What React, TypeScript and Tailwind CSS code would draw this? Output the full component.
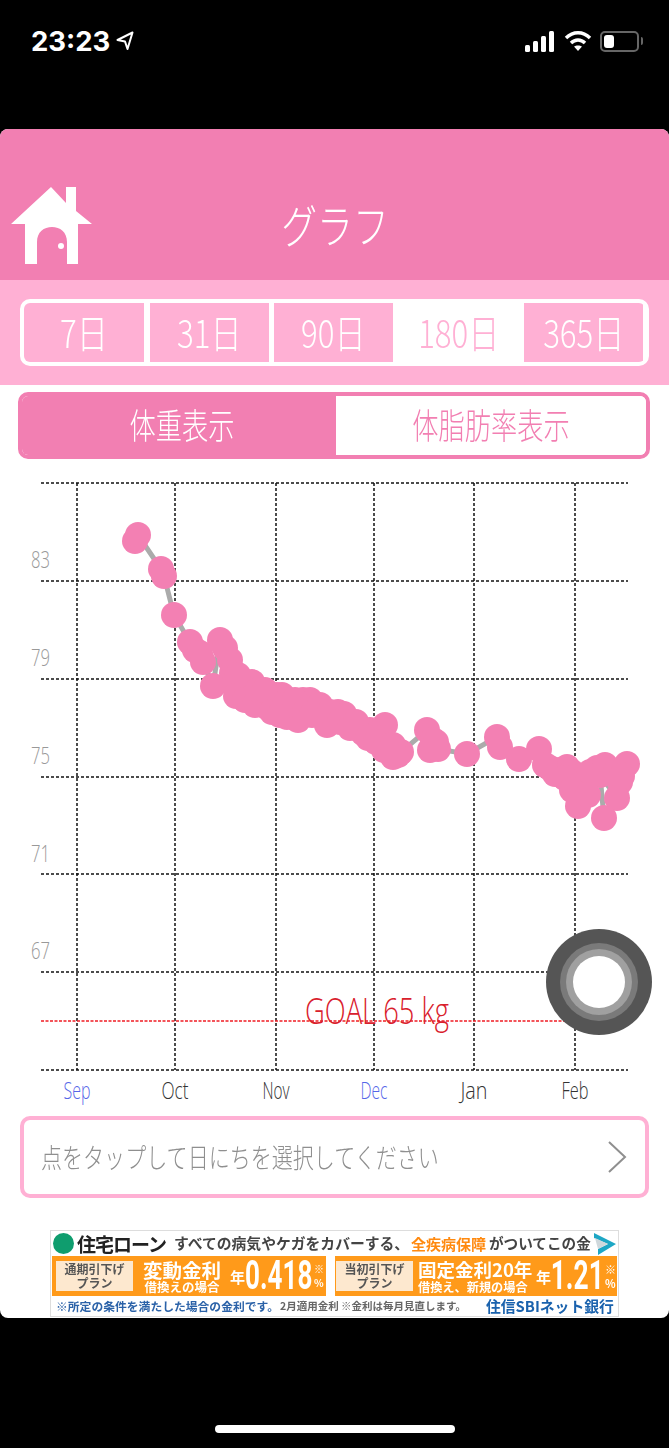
import React from "react";

const JP = { fontFamily: '"Noto Sans CJK JP", sans-serif' };
const NUM = { fontFamily: "Roboto, sans-serif" };

const hLines = [483, 581, 679, 777, 874, 972, 1070];
const vLines = [77, 175, 276, 374, 474, 575];
const yLabels: [string, number][] = [["83", 568], ["79", 666], ["75", 764], ["71", 862], ["67", 959]];
const months: [string, number, string][] = [
  ["Sep", 77, "#5566e8"], ["Oct", 175, "#333333"], ["Nov", 276, "#333333"],
  ["Dec", 374, "#5566e8"], ["Jan", 474, "#333333"], ["Feb", 575, "#333333"],
];
const pts: [number, number][] = [
  [135, 541], [138, 535], [161, 569], [164, 576], [174, 615], [190, 642], [195, 650], [200, 653], [203, 662],
  [213, 686], [220, 640], [225, 648], [230, 660], [232, 673], [235, 682], [240, 690], [243, 693], [248, 688],
  [252, 682], [256, 695], [262, 702], [267, 707], [272, 700], [277, 695], [282, 695], [287, 717], [292, 710],
  [298, 720], [303, 700], [310, 700], [316, 706], [322, 714], [327, 725], [333, 718], [338, 712], [344, 714],
  [350, 722], [357, 728], [363, 733], [370, 730], [378, 732], [385, 725], [382, 738], [388, 748], [393, 757],
  [398, 755], [401, 752], [427, 730], [433, 740], [430, 750], [438, 749], [467, 754], [497, 737], [500, 747],
  [519, 759], [539, 749], [550, 768], [555, 774], [560, 770], [567, 767], [572, 772], [577, 777], [577, 790],
  [578, 806], [587, 780], [597, 768], [610, 770], [627, 764], [620, 782], [617, 798], [600, 775], [604, 818],
];
const fill: [number, number][] = [
  [238, 675], [236, 696], [245, 700], [255, 705], [258, 690], [265, 690], [272, 712], [280, 715], [285, 705],
  [295, 700], [305, 712], [312, 715], [320, 705], [330, 712], [340, 722], [350, 728], [356, 722], [368, 738],
  [376, 742], [384, 750], [393, 745], [583, 785], [590, 772], [565, 778], [572, 790], [605, 765], [616, 772],
  [622, 776], [545, 765], [588, 795], [436, 742],
];

function House() {
  return (
    <svg width="82" height="78" viewBox="11 187 82 78" className="absolute left-[11px] top-[58px]">
      <path
        fillRule="evenodd"
        fill="#ffffff"
        d="M51 187 L66 203 L66 187 L76 187 L76 211 L92 224 L78 224 L78 264 L67 264 L67 242 C67 232 60 227 52 227 C44 227 37 232 37 242 L37 264 L25 264 L25 224 L11 224 Z"
      />
      <ellipse cx="61" cy="246" rx="3" ry="3" fill="#ffffff" />
    </svg>
  );
}

function PeriodCell({ label, className }: { label: string; className: string }) {
  return (
    <div className={`flex h-[59px] items-center justify-center pb-[3px] ${className}`}>
      <span className="scale-x-[0.8] whitespace-nowrap text-[39px] font-light leading-none">{label}</span>
    </div>
  );
}

function Chart() {
  return (
    <svg width="669" height="640" viewBox="0 465 669 640" className="block">
      {hLines.map((y) => (
        <line key={y} x1="41" x2="628" y1={y} y2={y} stroke="#111111" strokeWidth="1.5" strokeDasharray="3 2" />
      ))}
      {vLines.map((x) => (
        <line key={x} x1={x} x2={x} y1="483" y2="1070" stroke="#111111" strokeWidth="1.5" strokeDasharray="3 2" />
      ))}
      <line x1="41" x2="565" y1="1021" y2="1021" stroke="#f01c24" strokeWidth="1.6" strokeDasharray="3 1.5" />
      {yLabels.map(([t, y]) => (
        <text key={t} x="31" y={y} fontSize="24" fill="#999999" fontFamily="Open Sans" fontWeight="300" textLength="19" lengthAdjust="spacingAndGlyphs">{t}</text>
      ))}
      {months.map(([t, x, c]) => (
        <text key={t} x={x} y="1099" fontSize="24" fill={c} fontFamily="Open Sans" fontWeight="300" textAnchor="middle" textLength="27" lengthAdjust="spacingAndGlyphs">{t}</text>
      ))}
      <text x="305" y="1024" fontSize="37" fill="#d9202c" fontFamily="Open Sans" fontWeight="300" textLength="144" lengthAdjust="spacingAndGlyphs">GOAL 65 kg</text>
      <polyline points={pts.map((p) => p.join(",")).join(" ")} fill="none" stroke="#ababab" strokeWidth="5" />
      {pts.concat(fill).map(([x, y], i) => (
        <circle key={i} cx={x} cy={y} r="13" fill="#f380b3" />
      ))}
      <circle cx="599" cy="982" r="53" fill="#555555" />
      <circle cx="599" cy="982" r="39" fill="#7a7a7a" />
      <circle cx="599" cy="982" r="33" fill="#a0a0a0" />
      <circle cx="599" cy="982" r="26" fill="#ffffff" />
    </svg>
  );
}

function Ad() {
  return (
    <div className="mx-auto mt-[32px] flex h-[87px] w-[569px] flex-col overflow-hidden whitespace-nowrap border border-[#dddddd] bg-white blur-[0.7px]" style={JP}>
      <div className="flex h-[25px] shrink-0 items-center pl-[2px] font-bold text-[#444444]">
        <div className="h-[21px] w-[21px] shrink-0 rounded-full bg-[#0f9d6e]" />
        <span className="ml-[3px] w-[97px] shrink-0 text-[19px] leading-none tracking-[-1px] text-[#222222]">住宅ローン</span>
        <span className="w-[237px] shrink-0 text-[14.8px] leading-none">すべての病気やケガをカバーする、</span>
        <span className="w-[78px] shrink-0 text-[15px] leading-none text-[#ff8a10]">全疾病保障</span>
        <span className="w-[103px] shrink-0 text-[14.6px] leading-none">がついてこの金</span>
        <svg width="26" height="24" viewBox="0 0 26 24" className="shrink-0">
          <path d="M2 1 L24 12 L6 23 L6 17 L16 12 L2 6 Z" fill="#1ea7c5" />
          <path d="M3 6 L16 12 L6 17 Z" fill="#cfd8dc" />
        </svg>
      </div>
      <div className="flex h-[40px] shrink-0 text-white">
        <div className="ml-[1px] flex w-[274px] shrink-0 items-center bg-[#ff9a1a] pl-[4px]">
          <div className="flex h-[30px] w-[77px] shrink-0 flex-col items-center justify-center bg-[#fde8cf] text-[12px] font-bold leading-[14px] text-[#555555]">
            <span>通期引下げ</span><span>プラン</span>
          </div>
          <div className="ml-[8px] flex w-[82px] shrink-0 flex-col items-center font-bold">
            <span className="text-[19.5px] leading-[21px]">変動金利</span>
            <span className="text-[12.5px] leading-[14px]">借換えの場合</span>
          </div>
          <span className="ml-[7px] w-[15px] shrink-0 text-[15px] font-bold leading-none">年</span>
          <span className="ml-[1px] flex w-[66px] shrink-0 justify-center">
            <span className="scale-x-[0.65] text-[40px] font-bold leading-none" style={NUM}>0.418</span>
          </span>
          <span className="ml-[2px] text-[10px] font-bold leading-[14px]">※<br />%</span>
        </div>
        <div className="ml-[9px] flex w-[282px] shrink-0 items-center bg-[#ff9a1a] pl-[1px]">
          <div className="flex h-[30px] w-[77px] shrink-0 flex-col items-center justify-center bg-[#fde8cf] text-[12px] font-bold leading-[14px] text-[#555555]">
            <span>当初引下げ</span><span>プラン</span>
          </div>
          <div className="ml-[5px] flex w-[114px] shrink-0 flex-col items-start font-bold">
            <span className="text-[18.5px] leading-[21px]">固定金利20年</span>
            <span className="text-[12.2px] leading-[14px]">借換え、新規の場合</span>
          </div>
          <span className="ml-[4px] w-[15px] shrink-0 text-[15px] font-bold leading-none">年</span>
          <span className="ml-[1px] flex w-[50px] shrink-0 justify-center">
            <span className="scale-x-[0.66] text-[40px] font-bold leading-none" style={NUM}>1.21</span>
          </span>
          <span className="ml-[3px] text-[11px] font-bold leading-[14px]">※<br />%</span>
        </div>
      </div>
      <div className="flex h-[20px] shrink-0 items-center pl-[5px] font-bold leading-none">
        <span className="w-[224px] shrink-0 text-[11.8px] text-[#2b62a8]">※所定の条件を満たした場合の金利です。</span>
        <span className="w-[206px] shrink-0 text-[10.5px] text-[#666666]">2月適用金利 ※金利は毎月見直します。</span>
        <span className="text-[14.8px] text-[#1a62ad]">住信SBIネット銀行</span>
      </div>
    </div>
  );
}

export default function App() {
  return (
    <div className="flex h-[1448px] w-[669px] flex-col overflow-hidden bg-black" style={JP}>
      <div className="flex h-[129px] items-start justify-between pl-[31px] pr-[26px] pt-[27px] text-white">
        <div className="flex items-center">
          <span className="text-[27.5px] font-bold leading-[28px]" style={{ fontFamily: "Inter, sans-serif" }}>23:23</span>
          <svg width="18" height="20" viewBox="0 0 18 20" className="ml-[6px]">
            <path d="M16.5 1.5 L1.5 9 L9 10.5 L11.5 18 Z" fill="none" stroke="#ffffff" strokeWidth="2" strokeLinejoin="round" />
          </svg>
        </div>
        <div className="mt-[3px] flex items-center">
          <svg width="32" height="22" viewBox="0 0 32 22">
            <rect x="1" y="15" width="5" height="7" rx="1.5" fill="#fff" />
            <rect x="9" y="11" width="5" height="11" rx="1.5" fill="#fff" />
            <rect x="17" y="6" width="5" height="16" rx="1.5" fill="#fff" />
            <rect x="25" y="1" width="5" height="21" rx="1.5" fill="#fff" />
          </svg>
          <svg width="28" height="22" viewBox="0 0 28 22" className="ml-[8px]">
            <path d="M2 8 C9 1 19 1 26 8" fill="none" stroke="#fff" strokeWidth="3.4" />
            <path d="M7 13 C11 9 17 9 21 13" fill="none" stroke="#fff" strokeWidth="3.4" />
            <path d="M14 21 L10 16.5 C12 15 16 15 18 16.5 Z" fill="#fff" />
          </svg>
          <div className="ml-[8px] flex h-[21px] w-[39px] items-center rounded-[5px] border-2 border-[#666666] p-[2px]">
            <div className="h-full w-[10px] rounded-[3px] bg-white" />
          </div>
          <div className="ml-[2px] h-[8px] w-[2px] rounded-r-sm bg-[#666666]" />
        </div>
      </div>

      <div className="h-[1189px] overflow-hidden rounded-[8px] bg-white">
        <header className="relative flex h-[151px] items-start justify-center bg-[#f27fb2] pt-[66px] text-white">
          <House />
          <h1 className="scale-x-[0.78] text-[46px] font-light leading-[56px]">グラフ</h1>
        </header>

        <div className="h-[105px] bg-[#ffb0d4] px-[20px] pt-[19px]">
          <div className="flex h-[67px] overflow-hidden rounded-[10px] border-[4px] border-white bg-white">
            <PeriodCell label="7日" className="w-[120px] bg-[#ffb0d4] text-white" />
            <PeriodCell label="31日" className="ml-[6px] w-[119px] bg-[#ffb0d4] text-white" />
            <PeriodCell label="90日" className="ml-[5px] w-[119px] bg-[#ffb0d4] text-white" />
            <PeriodCell label="180日" className="w-[131px] bg-white text-[#ffb0d4]" />
            <PeriodCell label="365日" className="w-[119px] bg-[#ffb0d4] text-white" />
          </div>
        </div>

        <div className="mx-[18px] mt-[7px] flex h-[67px] w-[632px] overflow-hidden rounded-[10px] border-[4px] border-[#f27fb2]">
          <div className="flex w-[314px] items-center justify-center bg-[#f27fb2] pb-[4px] pl-[6px] text-white">
            <span className="scale-x-[0.75] text-[35px] font-light leading-none">体重表示</span>
          </div>
          <div className="flex flex-1 items-center justify-center bg-white pb-[4px] text-[#f27fb2]">
            <span className="scale-x-[0.75] whitespace-nowrap text-[35px] font-light leading-none">体脂肪率表示</span>
          </div>
        </div>

        <div className="mt-[6px]">
          <Chart />
        </div>

        <div className="mx-[20px] mt-[11px] flex h-[82px] items-center justify-between rounded-[10px] border-[4px] border-[#ffb0d4] pl-[17px] pr-[18px]">
          <span className="origin-left scale-x-[0.765] whitespace-nowrap text-[27.5px] font-light leading-none text-[#8f8f8f]">点をタップして日にちを選択してください</span>
          <svg width="20" height="34" viewBox="0 0 20 34"><path d="M2 2 L18 17 L2 32" fill="none" stroke="#8f8f8f" strokeWidth="2" /></svg>
        </div>

        <Ad />
      </div>

      <div className="flex flex-1 items-end justify-center pb-[15px]">
        <div className="h-[8px] w-[240px] rounded-full bg-white" />
      </div>
    </div>
  );
}
